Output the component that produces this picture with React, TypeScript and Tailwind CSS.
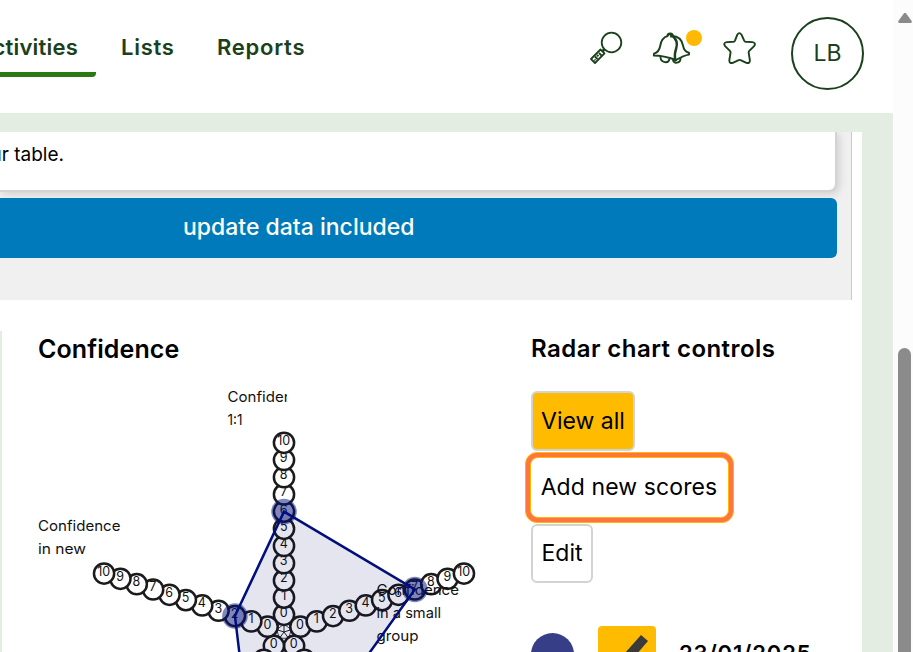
const FONT = "font-['Inter','Liberation_Sans',sans-serif]";

const CX = 284;
const CY = 252;
const STEP = 17.2;
const AXES = [
  { angle: -90, score: 6 },
  { angle: -18, score: 7 },
  { angle: 54, score: 4 },
  { angle: 126, score: 3 },
  { angle: 198, score: 2 },
];

function point(angle: number, n: number) {
  const a = (angle * Math.PI) / 180;
  const r = STEP * (n + 1);
  return { x: CX + r * Math.cos(a), y: CY + r * Math.sin(a) };
}

function Label({ x, lines }: { x: number; lines: { t: string; y: number; w: number }[] }) {
  return (
    <>
      {lines.map((l) => (
        <text key={l.t} x={x} y={l.y} textLength={l.w} lengthAdjust="spacingAndGlyphs" fontSize="14.6" fill="#111">
          {l.t}
        </text>
      ))}
    </>
  );
}

function RadarChart() {
  const shape = AXES.map((a) => point(a.angle, a.score));
  return (
    <svg width="500" height="272" viewBox="0 0 500 272" className="block">
      {AXES.map((a) => {
        const p = point(a.angle, 10);
        return <line key={a.angle} x1={CX} y1={CY} x2={p.x} y2={p.y} stroke="#222" strokeWidth="1" />;
      })}
      <polygon
        points={AXES.map((a) => point(a.angle, -0.55)).map((p) => `${p.x},${p.y}`).join(" ")}
        fill="none"
        stroke="#222"
        strokeWidth="0.8"
      />
      {AXES.map((a) =>
        Array.from({ length: 11 }, (_, n) => {
          const p = point(a.angle, n);
          return (
            <g key={`${a.angle}-${n}`}>
              <circle cx={p.x} cy={p.y} r="10.1" fill="#fff" stroke="#1b1b1b" strokeWidth="2.5" />
              <text x={p.x - 0.3} y={p.y + 2} textAnchor="middle" fontSize="12.5" fill="#111">
                {n}
              </text>
            </g>
          );
        }),
      )}
      <clipPath id="top-label">
        <rect x="220" y="0" width="67" height="60" />
      </clipPath>
      <g clipPath="url(#top-label)">
        <Label x={227.5} lines={[{ t: "Confidence", y: 22, w: 82.5 }, { t: "1:1", y: 45, w: 15 }]} />
      </g>
      <Label x={38} lines={[{ t: "Confidence", y: 151, w: 82.5 }, { t: "in new", y: 174, w: 48 }]} />
      <Label
        x={376.5}
        lines={[
          { t: "Confidence", y: 215, w: 82.5 },
          { t: "in a small", y: 238, w: 64.5 },
          { t: "group", y: 261, w: 42 },
        ]}
      />
      {shape.map((p, i) => (
        <circle key={i} cx={p.x} cy={p.y} r="12.8" fill="#00107c" fillOpacity="0.5" />
      ))}
      <polygon
        points={shape.map((p) => `${p.x},${p.y}`).join(" ")}
        fill="#000066"
        fillOpacity="0.1"
        stroke="#000f7c"
        strokeWidth="2.5"
      />
    </svg>
  );
}

function SearchIcon() {
  return (
    <svg width="34" height="34" viewBox="0 0 34 34" fill="none" stroke="#1a401c" strokeWidth="1.8">
      <circle cx="22.5" cy="11.500" r="9.800" />
      <path d="M15.300 18.500l-2 2" strokeWidth="2.500" />
      <path d="M11.500 18.500l4 3.800L6 32l-4-4z" strokeLinejoin="round" />
      <path d="M10 22l2.500 2.500M6 25.500l2.500 2.500M9.500 25.300l-1.500-1.300M5.500 28.500l.8.800" strokeWidth="1.800" />
    </svg>
  );
}

function BellIcon() {
  return (
    <svg width="40" height="34" viewBox="0 0 40 34" fill="none" stroke="#1a401c" strokeWidth="1.9" strokeLinejoin="round" strokeLinecap="round">
      <g transform="translate(-0.5 0.5)">
        <path d="M19 5.200C20 2 15.500 2 15.500 4.700 11 6 9 9.500 8.300 14 7.500 18.500 6 21 2 22.200L1.800 24C10 24 17 26 24 28.500" transform="translate(1.500 0)" />
        <path d="M17 4c.5-2.800 5.200-2.600 5.500 .5C29 5 31.500 9 32.500 14c.7 4 2.500 6.500 6 7.300v1.800c-5 .7-9 3-13 5.400" />
        <path d="M22 4.500c5 4 5 8 3.800 12-1 3.500-2.500 7-.8 12" strokeWidth="2.500" />
        <path d="M10 26c.5 5.300 8 6.300 8.800 1.800M22.500 28.500c1 4 7.500 3.500 7.500-1.500" />
      </g>
    </svg>
  );
}

function StarIcon() {
  return (
    <svg width="34" height="34" viewBox="0 0 34 34" fill="none" stroke="#1a401c" strokeWidth="1.9" strokeLinejoin="round">
      <path transform="translate(-0.3 0.3)" d="M14.600 3.400q2-3.200 4.200 0l2.700 5.900q.5 1 1.600 1.100l6.600.4q4 .8 1.700 4l-4.800 4.800q-.8.800-.6 1.900l1.200 7.500q0 3.500-3.500 2.500l-5.800-2.700q-1-.5-2 0l-5.800 2.700q-3.500 1-3.500-2.500l1.200-7.500q.2-1.100-.6-1.900l-4.800-4.800q-2.300-3.200 1.700-4l6.600-.4q1.100-.1 1.600-1.100z" />
    </svg>
  );
}

function Header() {
  return (
    <header className="flex h-[113px] shrink-0 bg-white text-[#1a401c]">
      <nav className="flex h-[77px] text-[22px] leading-[30px] font-semibold tracking-[0.75px] whitespace-nowrap">
        <div className="flex w-[96px] justify-end rounded-br border-b-[5px] border-[#297a12] pt-8 pr-[18px] tracking-[0.2px]">Activities</div>
        <div className="ml-[25px] w-[96px] pt-8">Lists</div>
        <div className="pt-8">Reports</div>
      </nav>
      <div className="ml-auto flex pr-[29px]">
        <div className="mr-[28px] pt-[31px]"><SearchIcon /></div>
        <div className="relative mr-[32px] pt-[31px]">
          <BellIcon />
          <span className="absolute top-[30px] left-[35px] size-4 rounded-full bg-[#ffb900]" />
        </div>
        <div className="mr-[34px] pt-[31px]"><StarIcon /></div>
        <div className="mt-[17px] flex size-[73px] items-center justify-center rounded-full border-2 border-[#1a401c] text-[23px]">LB</div>
      </div>
    </header>
  );
}

function Controls() {
  return (
    <section className="w-[331px] shrink-0 text-black">
      <h2 className="pt-px text-[24px] leading-8 font-semibold tracking-[0.45px] whitespace-nowrap">Radar chart controls</h2>
      <div className="mt-[26px] flex flex-col items-start text-[23px]">
        <button className="h-[60px] w-[104px] rounded-md border-2 border-[#d3d3d3] bg-[#ffbb00] whitespace-nowrap">View all</button>
        <button className="mt-px -ml-[6px] h-[71px] w-[209px] rounded-xl border border-[#ffb900] bg-[#ff7542] p-[4px] whitespace-nowrap">
          <span className="flex h-full items-center justify-center rounded-lg border border-[#ffb900] bg-white pr-px tracking-[0.1px]">Add new scores</span>
        </button>
        <button className="mt-px h-[59px] w-[62px] rounded-md border-2 border-[#d3d3d3] bg-white">Edit</button>
      </div>
      <div className="mt-[43px] flex items-start">
        <span className="mt-[7px] size-[43px] rounded-full bg-[#353e87]" />
        <span className="ml-6 flex size-[58px] rounded-sm bg-[#ffbb00]">
          <svg width="58" height="58" viewBox="0 0 58 58"><path d="M43 9l7 6-24 28-10 4 3-11z" fill="#3a3a3a" /></svg>
        </span>
        <span className="mt-[11px] ml-[23px] text-[22px] leading-8 font-semibold tracking-[0.85px]">23/01/2025</span>
      </div>
    </section>
  );
}

export default function App() {
  return (
    <div className={`flex h-[652px] w-[913px] overflow-hidden bg-[#fcfcfc] ${FONT}`}>
      <div className="flex w-[893px] shrink-0 flex-col bg-[#e3ede1]">
        <Header />
        <main className="mt-[19px] flex h-[520px] w-[862px] flex-col bg-white">
          <div className="h-[168px] w-[852px] shrink-0 overflow-hidden border-r border-[#c8c8c8] bg-[#f0f0f0]">
            <div className="flex h-[60px] w-[837px] rounded-br-lg border-r-2 border-b-2 border-[#d3d3d3] bg-white pt-2 text-[19px] leading-[30px] text-black shadow-[2px_2px_8px_rgba(0,0,0,0.15)]">
              <div className="flex w-[64px] justify-end whitespace-nowrap">your table.</div>
            </div>
            <div className="mt-[6px] flex h-[60px] w-[837px] items-center rounded-r-md bg-[#007aba] pb-0.5 pl-[183px] text-[23px] font-medium whitespace-nowrap text-[#fbfff5]">update data included</div>
          </div>
          <div className="flex h-[352px] overflow-hidden pt-8">
            <div className="-mt-px w-[531px] shrink-0 border-l-2 border-[#e3ede1]">
              <h2 className="ml-9 pt-0.5 text-[25px] leading-8 font-semibold tracking-[0.1px] text-black">Confidence</h2>
              <div className="mt-[15px] -ml-0.5"><RadarChart /></div>
            </div>
            <Controls />
          </div>
        </main>
      </div>
      <div className="flex w-5 flex-col items-center">
        <svg width="16" height="12" viewBox="0 0 16 12" className="mt-3 ml-[3px] shrink-0"><path d="M7 1.200q1-1 2 0l5.500 7.500q1 2-1 2.300h-11q-2-.3-1-2.300z" fill="#8a8a8a" /></svg>
        <div className="mt-[324px] ml-[3px] h-[310px] w-[13px] shrink-0 rounded-t-lg bg-[#8b8b8b]" />
      </div>
    </div>
  );
}
